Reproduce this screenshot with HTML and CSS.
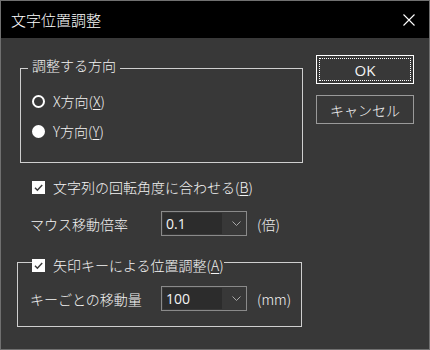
FILE: index.html
```html
<!DOCTYPE html>
<html lang="ja">
<head>
<meta charset="utf-8">
<title>文字位置調整</title>
<link rel="stylesheet" href="styles.css">
</head>
<body>
<div class="window">
  <div class="titlebar">
    <span class="title">文字位置調整</span>
    <svg class="close" width="12" height="12" viewBox="0 0 12 12"><path d="M0.5 0.5 L11.5 11.5 M11.5 0.5 L0.5 11.5" stroke="#ffffff" stroke-width="1.1" fill="none"/></svg>
  </div>
  <div class="content">
    <div class="left">
      <fieldset class="group g1">
        <legend class="legend1">調整する方向</legend>
        <div class="opt"><span class="radio"></span><span>X方向(<u>X</u>)</span></div>
        <div class="opt"><span class="radio on"></span><span>Y方向(<u>Y</u>)</span></div>
      </fieldset>
      <div class="opt check-row"><span class="check"><svg width="13" height="13" viewBox="0 0 13 13"><path d="M3 6.8 L5.4 9.2 L10.2 4" stroke="#3a3a3a" stroke-width="1.5" fill="none"/></svg></span><span>文字列の回転角度に合わせる(<u>B</u>)</span></div>
      <div class="field-row mouse-row">
        <span class="label">マウス移動倍率</span>
        <div class="combo"><span class="combo-text">0.1</span><svg class="chev" width="9" height="5" viewBox="0 0 9 5"><path d="M0.5 0.5 L4.5 4.5 L8.5 0.5" stroke="#a8a8a8" stroke-width="1" fill="none"/></svg></div>
        <span class="unit">(倍)</span>
      </div>
      <fieldset class="group g2">
        <legend class="legend2"><span class="opt"><span class="check"><svg width="13" height="13" viewBox="0 0 13 13"><path d="M3 6.8 L5.4 9.2 L10.2 4" stroke="#3a3a3a" stroke-width="1.5" fill="none"/></svg></span><span>矢印キーによる位置調整(<u>A</u>)</span></span></legend>
        <div class="field-row">
          <span class="label">キーごとの移動量</span>
          <div class="combo"><span class="combo-text">100</span><svg class="chev" width="9" height="5" viewBox="0 0 9 5"><path d="M0.5 0.5 L4.5 4.5 L8.5 0.5" stroke="#a8a8a8" stroke-width="1" fill="none"/></svg></div>
          <span class="unit">(mm)</span>
        </div>
      </fieldset>
    </div>
    <div class="right">
      <button class="btn ok">OK</button>
      <button class="btn">キャンセル</button>
    </div>
  </div>
</div>
</body>
</html>
```
FILE: styles.css
```css
* { box-sizing: border-box; }
html, body { margin: 0; padding: 0; background: #383838; }
body {
  font-family: "Noto Sans CJK JP", "Noto Sans", sans-serif;
  font-size: 14px;
  font-weight: 300;
  color: #f4f4f4;
}
.window {
  width: 430px;
  height: 350px;
  border: 1px solid #707070;
  background: #383838;
  display: flex;
  flex-direction: column;
}
.titlebar {
  height: 37px;
  background: #000;
  display: flex;
  align-items: center;
  justify-content: space-between;
  padding: 0 14px 0 10px;
  flex: none;
}
.title {
  font-size: 15px;
  color: #fff;
  line-height: 20px;
}
.close { display: block; margin-top: 1px; }
.content {
  flex: 1;
  display: flex;
  padding: 0 15px 0 16px;
}
.left {
  width: 285px;
  display: flex;
  flex-direction: column;
}
.right {
  margin-left: auto;
  padding-top: 17px;
  display: flex;
  flex-direction: column;
  gap: 11px;
}
.group {
  margin: 0;
  border: 1px solid #cfcfcf;
  min-width: 0;
}
.g1 {
  margin: 18px 0 0 3px;
  width: 283px;
  padding: 6px 0 16px 11px;
}
.legend1 {
  margin-left: -4px;
  padding: 0 4px 5px;
  line-height: 19px;
}
.g2 {
  margin-top: 14px;
  width: 285px;
  padding: 11px 0 15px 14px;
}
.legend2 {
  padding: 6px 0 0 0;
  line-height: 19px;
}
.opt {
  display: flex;
  align-items: center;
  gap: 8px;
  height: 30px;
  line-height: 19px;
}
.legend2 .opt { height: 19px; }
.radio {
  width: 13px;
  height: 13px;
  border-radius: 50%;
  border: 2px solid #ffffff;
  flex: none;
}
.radio.on { background: #ffffff; }
.check {
  width: 13px;
  height: 13px;
  background: #ffffff;
  flex: none;
  display: block;
}
.check svg { display: block; }
.check-row {
  margin: 12px 0 0 15px;
  height: 24px;
}
u { text-decoration: underline; text-underline-offset: 2px; }
.field-row {
  display: flex;
  align-items: center;
  height: 25px;
}
.mouse-row { margin: 12px 0 0 13px; }
.g2 .field-row { margin-left: -2px; }
.label { width: 131px; flex: none; }
.combo {
  width: 86px;
  height: 25px;
  border: 1px solid #8a8a8a;
  display: flex;
  align-items: center;
  padding: 1px;
  flex: none;
}
.combo-text {
  width: 59px;
  height: 21px;
  background: #2c2c2c;
  padding-left: 3px;
  line-height: 21px;
  font-family: "Open Sans", "Noto Sans", sans-serif;
  font-weight: 400;
  font-size: 14px;
}
.chev { margin-left: 10px; display: block; }
.unit { margin-left: 10px; }
.btn {
  width: 98px;
  height: 29px;
  background: #383838;
  border: 1px solid #9a9a9a;
  color: #f4f4f4;
  font-family: "Noto Sans CJK JP", "Noto Sans", sans-serif;
  font-weight: 300;
  font-size: 14px;
  padding: 0;
}
.btn.ok {
  border-color: #ffffff;
  outline: 1px dotted #ffffff;
  outline-offset: -4px;
  font-family: "Open Sans", "Noto Sans", sans-serif;
  font-weight: 400;
  font-size: 15px;
}
```
